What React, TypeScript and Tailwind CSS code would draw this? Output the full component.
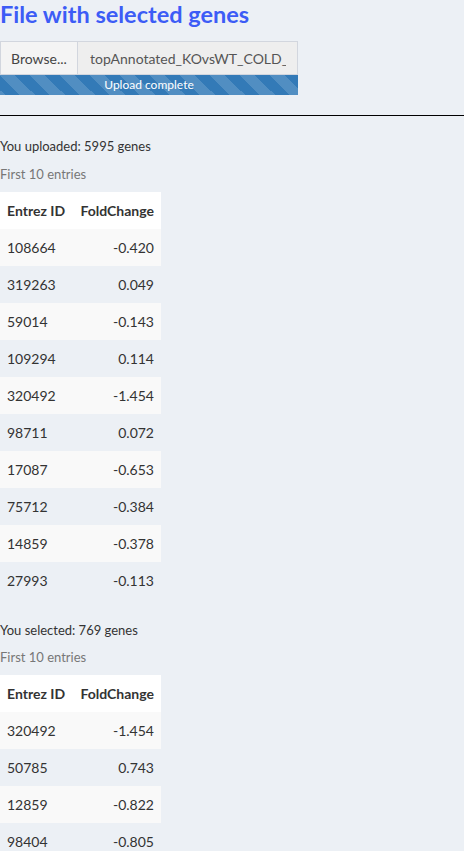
import React from 'react';

const uploaded = [
  ['108664', '-0.420'],
  ['319263', '0.049'],
  ['59014', '-0.143'],
  ['109294', '0.114'],
  ['320492', '-1.454'],
  ['98711', '0.072'],
  ['17087', '-0.653'],
  ['75712', '-0.384'],
  ['14859', '-0.378'],
  ['27993', '-0.113'],
];

const selected = [
  ['320492', '-1.454'],
  ['50785', '0.743'],
  ['12859', '-0.822'],
  ['98404', '-0.805'],
];

function GeneTable({ rows }: { rows: string[][] }) {
  return (
    <table className="w-[161px] table-fixed border-collapse text-[14px] text-[#333]">
      <thead>
        <tr className="h-[37px] bg-white">
          <th className="w-[70px] whitespace-nowrap pl-[7px] pr-1 text-left font-bold">Entrez ID</th>
          <th className="w-[91px] whitespace-nowrap pl-1 pr-[7px] text-right font-bold">FoldChange</th>
        </tr>
      </thead>
      <tbody>
        {rows.map((r, i) => (
          <tr key={i} className={i % 2 === 0 ? 'h-[37px] bg-[#f9f9f9]' : 'h-[37px]'}>
            <td className="pl-[7px] pr-1 text-left">{r[0]}</td>
            <td className="pl-1 pr-[7px] text-right">{r[1]}</td>
          </tr>
        ))}
      </tbody>
    </table>
  );
}

export default function App() {
  return (
    <div className="min-h-screen bg-[#ecf0f5] font-['Lato',sans-serif] text-[14px] text-[#333]">
      {/* Title */}
      <h3 className="pt-[1px] text-[23.5px] leading-[26px] font-bold text-[#3c5cf6]">File with selected genes</h3>

      {/* File input */}
      <div className="mt-[14px] w-[298px]">
        <div className="flex h-[34px]">
          <div className="flex w-[78px] items-center justify-center border border-[#d2d6de] bg-[#f4f4f4] text-[#444]">
            Browse...
          </div>
          <div className="flex min-w-0 flex-1 items-center border border-l-0 border-[#d2d6de] bg-[#eeeeee] pl-3 pr-[11px] text-[#555]">
            <span className="overflow-hidden whitespace-nowrap">topAnnotated_KOvsWT_COLD_genes.csv</span>
          </div>
        </div>
        <div className="flex h-[20px] items-center justify-center bg-[#337ab7] bg-[linear-gradient(45deg,rgba(255,255,255,.15)_25%,transparent_25%,transparent_50%,rgba(255,255,255,.15)_50%,rgba(255,255,255,.15)_75%,transparent_75%,transparent)] bg-[length:30px_30px] text-[12px] leading-[20px] text-white">
          Upload complete
        </div>
      </div>

      <hr className="mt-[20px] border-t border-black" />

      {/* Uploaded */}
      <p className="mt-[20px] text-[13px] leading-[20px]">You uploaded: 5995 genes</p>
      <p className="mt-[8px] text-[13px] leading-[20px] text-[#777]">First 10 entries</p>
      <div className="mt-[8px]">
        <GeneTable rows={uploaded} />
      </div>

      {/* Selected */}
      <p className="mt-[21px] text-[13px] leading-[20px]">You selected: 769 genes</p>
      <p className="mt-[7px] text-[13px] leading-[20px] text-[#777]">First 10 entries</p>
      <div className="mt-[8px]">
        <GeneTable rows={selected} />
      </div>
    </div>
  );
}
